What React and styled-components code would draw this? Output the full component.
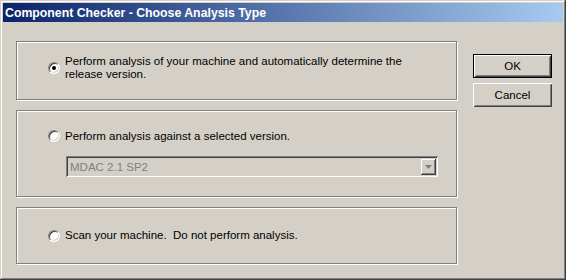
import styled, { createGlobalStyle } from 'styled-components';

const GlobalStyle = createGlobalStyle`
  html, body {
    margin: 0;
    padding: 0;
    background: #d4d0c8;
  }
  * {
    box-sizing: border-box;
  }
`;

const Window = styled.div`
  width: 566px;
  height: 280px;
  padding: 3px;
  background: #d4d0c8;
  font-family: "Liberation Sans", Arial, sans-serif;
  font-size: 11.5px;
  color: #000;
  box-shadow:
    inset -1px -1px #404040,
    inset 1px 1px #d4d0c8,
    inset -2px -2px #808080,
    inset 2px 2px #ffffff;
  display: flex;
  flex-direction: column;
`;

const TitleBar = styled.div`
  height: 19px;
  display: flex;
  align-items: center;
  padding-left: 2px;
  background: linear-gradient(to right, #0a246a, #a6caf0);
  color: #fff;
  font-weight: bold;
  font-size: 12.3px;
  white-space: nowrap;
`;

const Body = styled.div`
  display: flex;
  align-items: flex-start;
  gap: 15px;
  padding: 19px 11px 0 13px;
`;

const Options = styled.div`
  width: 442px;
  display: flex;
  flex-direction: column;
  gap: 10px;
`;

const Group = styled.div`
  width: 441px;
  height: ${(p) => p.$h}px;
  border: 1px solid #808080;
  box-shadow: 1px 1px 0 #fff, inset 1px 1px 0 #fff;
  display: flex;
  flex-direction: column;
  justify-content: ${(p) => (p.$top != null ? 'flex-start' : 'center')};
  padding: ${(p) => (p.$top != null ? `${p.$top}px 0 0 31px` : '0 0 0 31px')};
`;

const Option = styled.label`
  display: flex;
  align-items: center;
  gap: 5px;
  line-height: 13px;
  min-height: 14px;
`;

const Radio = styled.span`
  position: relative;
  flex: none;
  width: 12px;
  height: 12px;
  border-radius: 50%;
  background: #fff;
  border: 1px solid;
  border-color: #808080 #fff #fff #808080;
  box-shadow: inset 1px 1px 0 #404040, inset -1px -1px 0 #d4d0c8;
  &::after {
    content: '';
    display: ${(p) => (p.$checked ? 'block' : 'none')};
    position: absolute;
    left: 3px;
    top: 3px;
    width: 4px;
    height: 4px;
    border-radius: 50%;
    background: #000;
  }
`;

const Combo = styled.div`
  margin: 13px 0 0 18px;
  width: 372px;
  height: 21px;
  display: flex;
  align-items: center;
  justify-content: space-between;
  padding: 2px 2px 2px 4px;
  background: #d4d0c8;
  color: #808080;
  box-shadow:
    inset 1px 1px 0 #808080,
    inset -1px -1px 0 #fff,
    inset 2px 2px 0 #404040,
    inset -2px -2px 0 #d4d0c8;
`;

const DropButton = styled.span`
  width: 16px;
  height: 17px;
  display: flex;
  align-items: center;
  justify-content: center;
  background: #d4d0c8;
  box-shadow:
    inset 1px 1px 0 #d4d0c8,
    inset -1px -1px 0 #404040,
    inset 2px 2px 0 #fff,
    inset -2px -2px 0 #808080;
`;

const Buttons = styled.div`
  margin-top: 13px;
  display: flex;
  flex-direction: column;
  gap: 5px;
`;

const Button = styled.button`
  width: 79px;
  height: 24px;
  margin: 0;
  padding: 0;
  border: ${(p) => (p.$default ? '1px solid #000' : 'none')};
  background: #d4d0c8;
  font-family: "Liberation Sans", Arial, sans-serif;
  font-size: 11.5px;
  color: #000;
  box-shadow:
    inset 1px 1px 0 #fff,
    inset -1px -1px 0 #404040,
    inset 2px 2px 0 #d4d0c8,
    inset -2px -2px 0 #808080;
`;

function Arrow() {
  return (
    <svg width="7" height="4" viewBox="0 0 7 4">
      <path d="M0 0h7L3.5 4z" fill="#808080" />
    </svg>
  );
}

export default function App() {
  return (
    <>
      <GlobalStyle />
      <Window>
        <TitleBar>Component Checker - Choose Analysis Type</TitleBar>
        <Body>
          <Options>
            <Group $h={59} $top={13}>
              <Option>
                <Radio $checked />
                <span>
                  Perform analysis of your machine and automatically determine the
                  <br />
                  release version.
                </span>
              </Option>
            </Group>
            <Group $h={87} $top={18}>
              <Option>
                <Radio />
                <span>Perform analysis against a selected version.</span>
              </Option>
              <Combo>
                <span>MDAC 2.1 SP2</span>
                <DropButton>
                  <Arrow />
                </DropButton>
              </Combo>
            </Group>
            <Group $h={57}>
              <Option>
                <Radio />
                <span>Scan your machine.&nbsp; Do not perform analysis.</span>
              </Option>
            </Group>
          </Options>
          <Buttons>
            <Button $default>OK</Button>
            <Button>Cancel</Button>
          </Buttons>
        </Body>
      </Window>
    </>
  );
}
